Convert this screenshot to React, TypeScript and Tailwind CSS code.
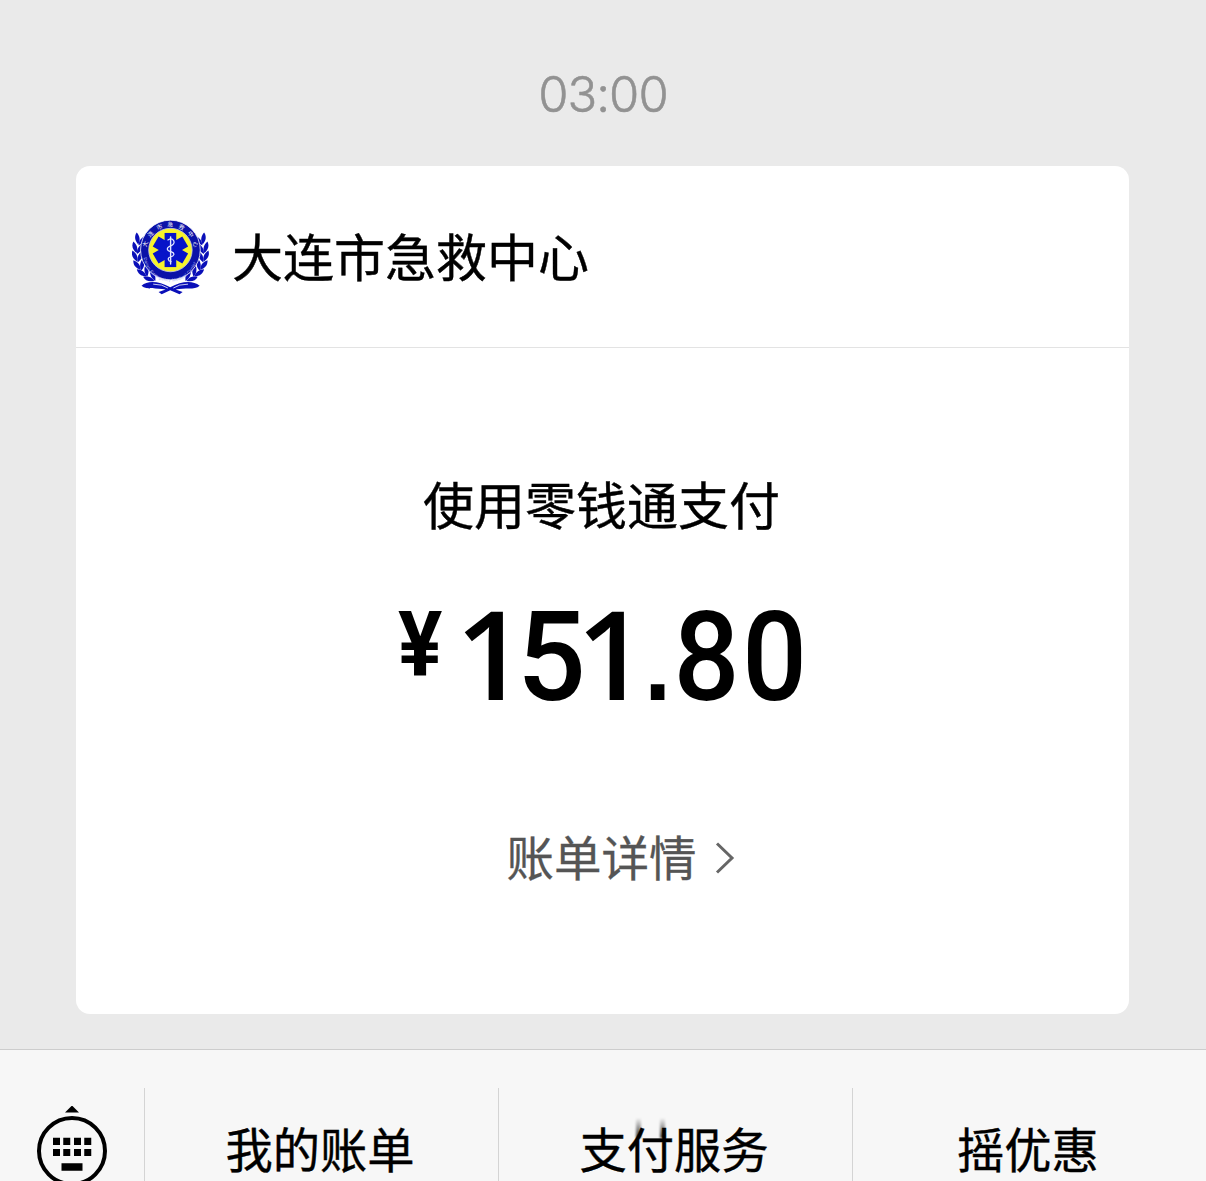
import React from 'react';
import clsx from 'clsx';

const menus = ['我的账单', '支付服务', '摇优惠'];

const amount = [
  { char: '1', cell: "-mt-[5px] w-[62px] text-[124px] font-['Open_Sans',sans-serif] font-semibold", glyph: 'scale-x-100' },
  { char: '5', cell: 'w-[59px] text-[125px]', glyph: 'scale-x-[.97]' },
  { char: '1', cell: "-mt-[5px] w-[62px] text-[124px] font-['Open_Sans',sans-serif] font-semibold", glyph: 'scale-x-100' },
  { char: '.', cell: "mt-[16px] w-[30px] text-[105px] font-['Liberation_Sans',sans-serif] font-bold", glyph: 'scale-x-[.92]' },
  { char: '8', cell: 'w-[68px] text-[125px]', glyph: 'scale-x-[.93]' },
  { char: '0', cell: 'w-[67px] text-[125px]', glyph: 'scale-x-[.91]' },
];

const leaves = [
  { x: 9, y: 27, r: 8 },
  { x: 6, y: 38, r: 0 },
  { x: 6, y: 49, r: -8 },
  { x: 9, y: 60, r: -22 },
  { x: 15, y: 69, r: -38 },
  { x: 24, y: 76, r: -55 },
];

function Laurel() {
  return (
    <g fill="#0a0fb8">
      {leaves.map((l, i) => (
        <g key={i} transform={`translate(${l.x} ${l.y}) rotate(${l.r})`}>
          <path d="M-0.500 6C-6 1 -7 -4 -4.500 -9C0 -5 2 0 -0.500 6Z" />
          <path d="M0 7C-0.500 1 3 -4 7 -6C9 -1 6 4 0 7Z" />
        </g>
      ))}
    </g>
  );
}

function Emblem() {
  return (
    <svg className="h-[76px] w-[78px] shrink-0" viewBox="0 0 100 98">
      <Laurel />
      <g transform="translate(98.500 0) scale(-1 1)">
        <Laurel />
      </g>
      <path
        d="M12 86C20 79 34 80 49 88C64 80 78 79 87 86C80 92 68 88 56 91L65 94L61 97L49 92L38 97L34 94L43 91C31 88 19 92 12 86Z"
        fill="#0a0fb8"
      />
      <path d="M27 84Q39 84 46 89M72 84Q60 84 53 89" fill="none" stroke="#fff" strokeWidth="1" />
      <circle cx="49.250" cy="40" r="38.500" fill="#0b12a8" stroke="#fff" strokeWidth="1" />
      <circle cx="49.250" cy="40" r="28" fill="#f7f32b" stroke="#c9cdf0" strokeWidth="1" />
      <path id="arc-top" d="M19.250 46A30.500 30.500 0 1 1 79.250 46" fill="none" />
      <path id="arc-bottom" d="M14.750 46A34.500 34.500 0 0 0 83.750 46" fill="none" />
      <text fill="#fff" fontSize="7.500" fontFamily="'Noto Sans CJK SC', sans-serif" letterSpacing="6">
        <textPath href="#arc-top" startOffset="9">大连市急救中心</textPath>
      </text>
      <text fill="#b4baf5" fontSize="5.500" fontFamily="'Liberation Sans', sans-serif">
        <textPath href="#arc-bottom" startOffset="4" textLength="94">Dalian Emergency Medical Center</textPath>
      </text>
      <g fill="#0713c9">
        <rect x="41.750" y="18" width="15" height="44" />
        <rect x="41.750" y="18" width="15" height="44" transform="rotate(60 49.250 40)" />
        <rect x="41.750" y="18" width="15" height="44" transform="rotate(-60 49.250 40)" />
      </g>
      <g fill="none" stroke="#e6e9ff" strokeLinecap="round">
        <path d="M49.500 23V58" strokeWidth="1.800" />
        <path d="M46 27C53 23 57 31 51 34C43 37 44 41 50 42C56 44 54 48 49 49C45 50 46 54 50 55" strokeWidth="1.600" />
      </g>
    </svg>
  );
}

function KeyboardIcon() {
  return (
    <svg className="h-[84px] w-[72px] shrink-0" viewBox="0 0 72 84">
      <path d="M29 6.500L36 -0.500L43 6.500Z" fill="#000" />
      <circle cx="36" cy="45" r="33" fill="none" stroke="#000" strokeWidth="4" />
      {[17, 27.250, 38, 48.250].map((x) => (
        <g key={x}>
          <rect x={x} y="31.750" width="7" height="7.250" />
          <rect x={x} y="43" width="7" height="7" />
        </g>
      ))}
      <rect x="25.500" y="57.250" width="21" height="7.500" />
    </svg>
  );
}

export default function App() {
  return (
    <div className="flex h-[1181px] w-[1206px] flex-col overflow-hidden bg-[#eaeaea] font-['Noto_Sans_CJK_SC',sans-serif] text-black">
      <div className="flex h-[166px] shrink-0 items-center justify-center pt-[23px] font-['Inter',sans-serif] text-[49px] font-light tracking-[-1px] text-[#929292] [-webkit-text-stroke:0.5px]">
        03:00
      </div>

      <main className="ml-[76px] flex h-[848px] w-[1053px] shrink-0 flex-col rounded-[14px] bg-white">
        <header className="flex h-[182px] shrink-0 items-center border-b border-[#e3e3e3] pl-14">
          <Emblem />
          <h1 className="-mt-[4px] ml-[22px] text-[51px] leading-[74px] [-webkit-text-stroke:0.4px]">大连市急救中心</h1>
        </header>

        <section className="flex flex-col items-center">
          <p className="mt-[118px] -ml-[2px] text-[51px] leading-[74px] [-webkit-text-stroke:0.4px]">使用零钱通支付</p>
          <div className="mt-[55px] flex h-[130px] items-start font-['Roboto',sans-serif] leading-none font-medium">
            <span className="mt-[6px] mr-[17px] flex w-[46px] justify-center text-[90px] font-bold">
              <span className="inline-block scale-x-[.92]">¥</span>
            </span>
            {amount.map((a, i) => (
              <span key={i} className={clsx('flex justify-center', a.cell)}>
                <span className={clsx('inline-block', a.glyph)}>{a.char}</span>
              </span>
            ))}
          </div>
          <a className="mt-[96px] ml-[36px] flex items-center text-[47.5px] leading-[70px] text-[#555] [-webkit-text-stroke:0.3px]">
            账单详情
            <svg className="mt-1 ml-[18px] h-8 w-5" viewBox="0 0 20 32" fill="none" stroke="#666" strokeWidth="3">
              <path d="M2 1.500L17 16L2 30.500" />
            </svg>
          </a>
        </section>
      </main>

      <nav className="mt-[35px] flex h-[132px] shrink-0 border-t border-[#cdcdcd] bg-[#f7f7f7]">
        <div className="flex w-[144px] shrink-0 justify-center pt-[56px]">
          <KeyboardIcon />
        </div>
        {menus.map((label, i) => (
          <div key={label} className="mt-[38px] flex w-[354px] shrink-0 justify-center border-l border-[#d4d4d4] pt-[35px]">
            <span className="relative -ml-[3px] h-[50px] text-[47.25px] leading-[50px] whitespace-nowrap [-webkit-text-stroke:0.4px]">
              {label}
              {i === 1 && (
                <>
                  <i className="absolute -top-[5px] left-[57px] h-5 w-[5px] bg-linear-to-b from-transparent to-black/80 blur-[1px]" />
                  <i className="absolute -top-[5px] left-[81px] h-5 w-[5px] bg-linear-to-b from-transparent to-black/80 blur-[1px]" />
                </>
              )}
            </span>
          </div>
        ))}
      </nav>
    </div>
  );
}
